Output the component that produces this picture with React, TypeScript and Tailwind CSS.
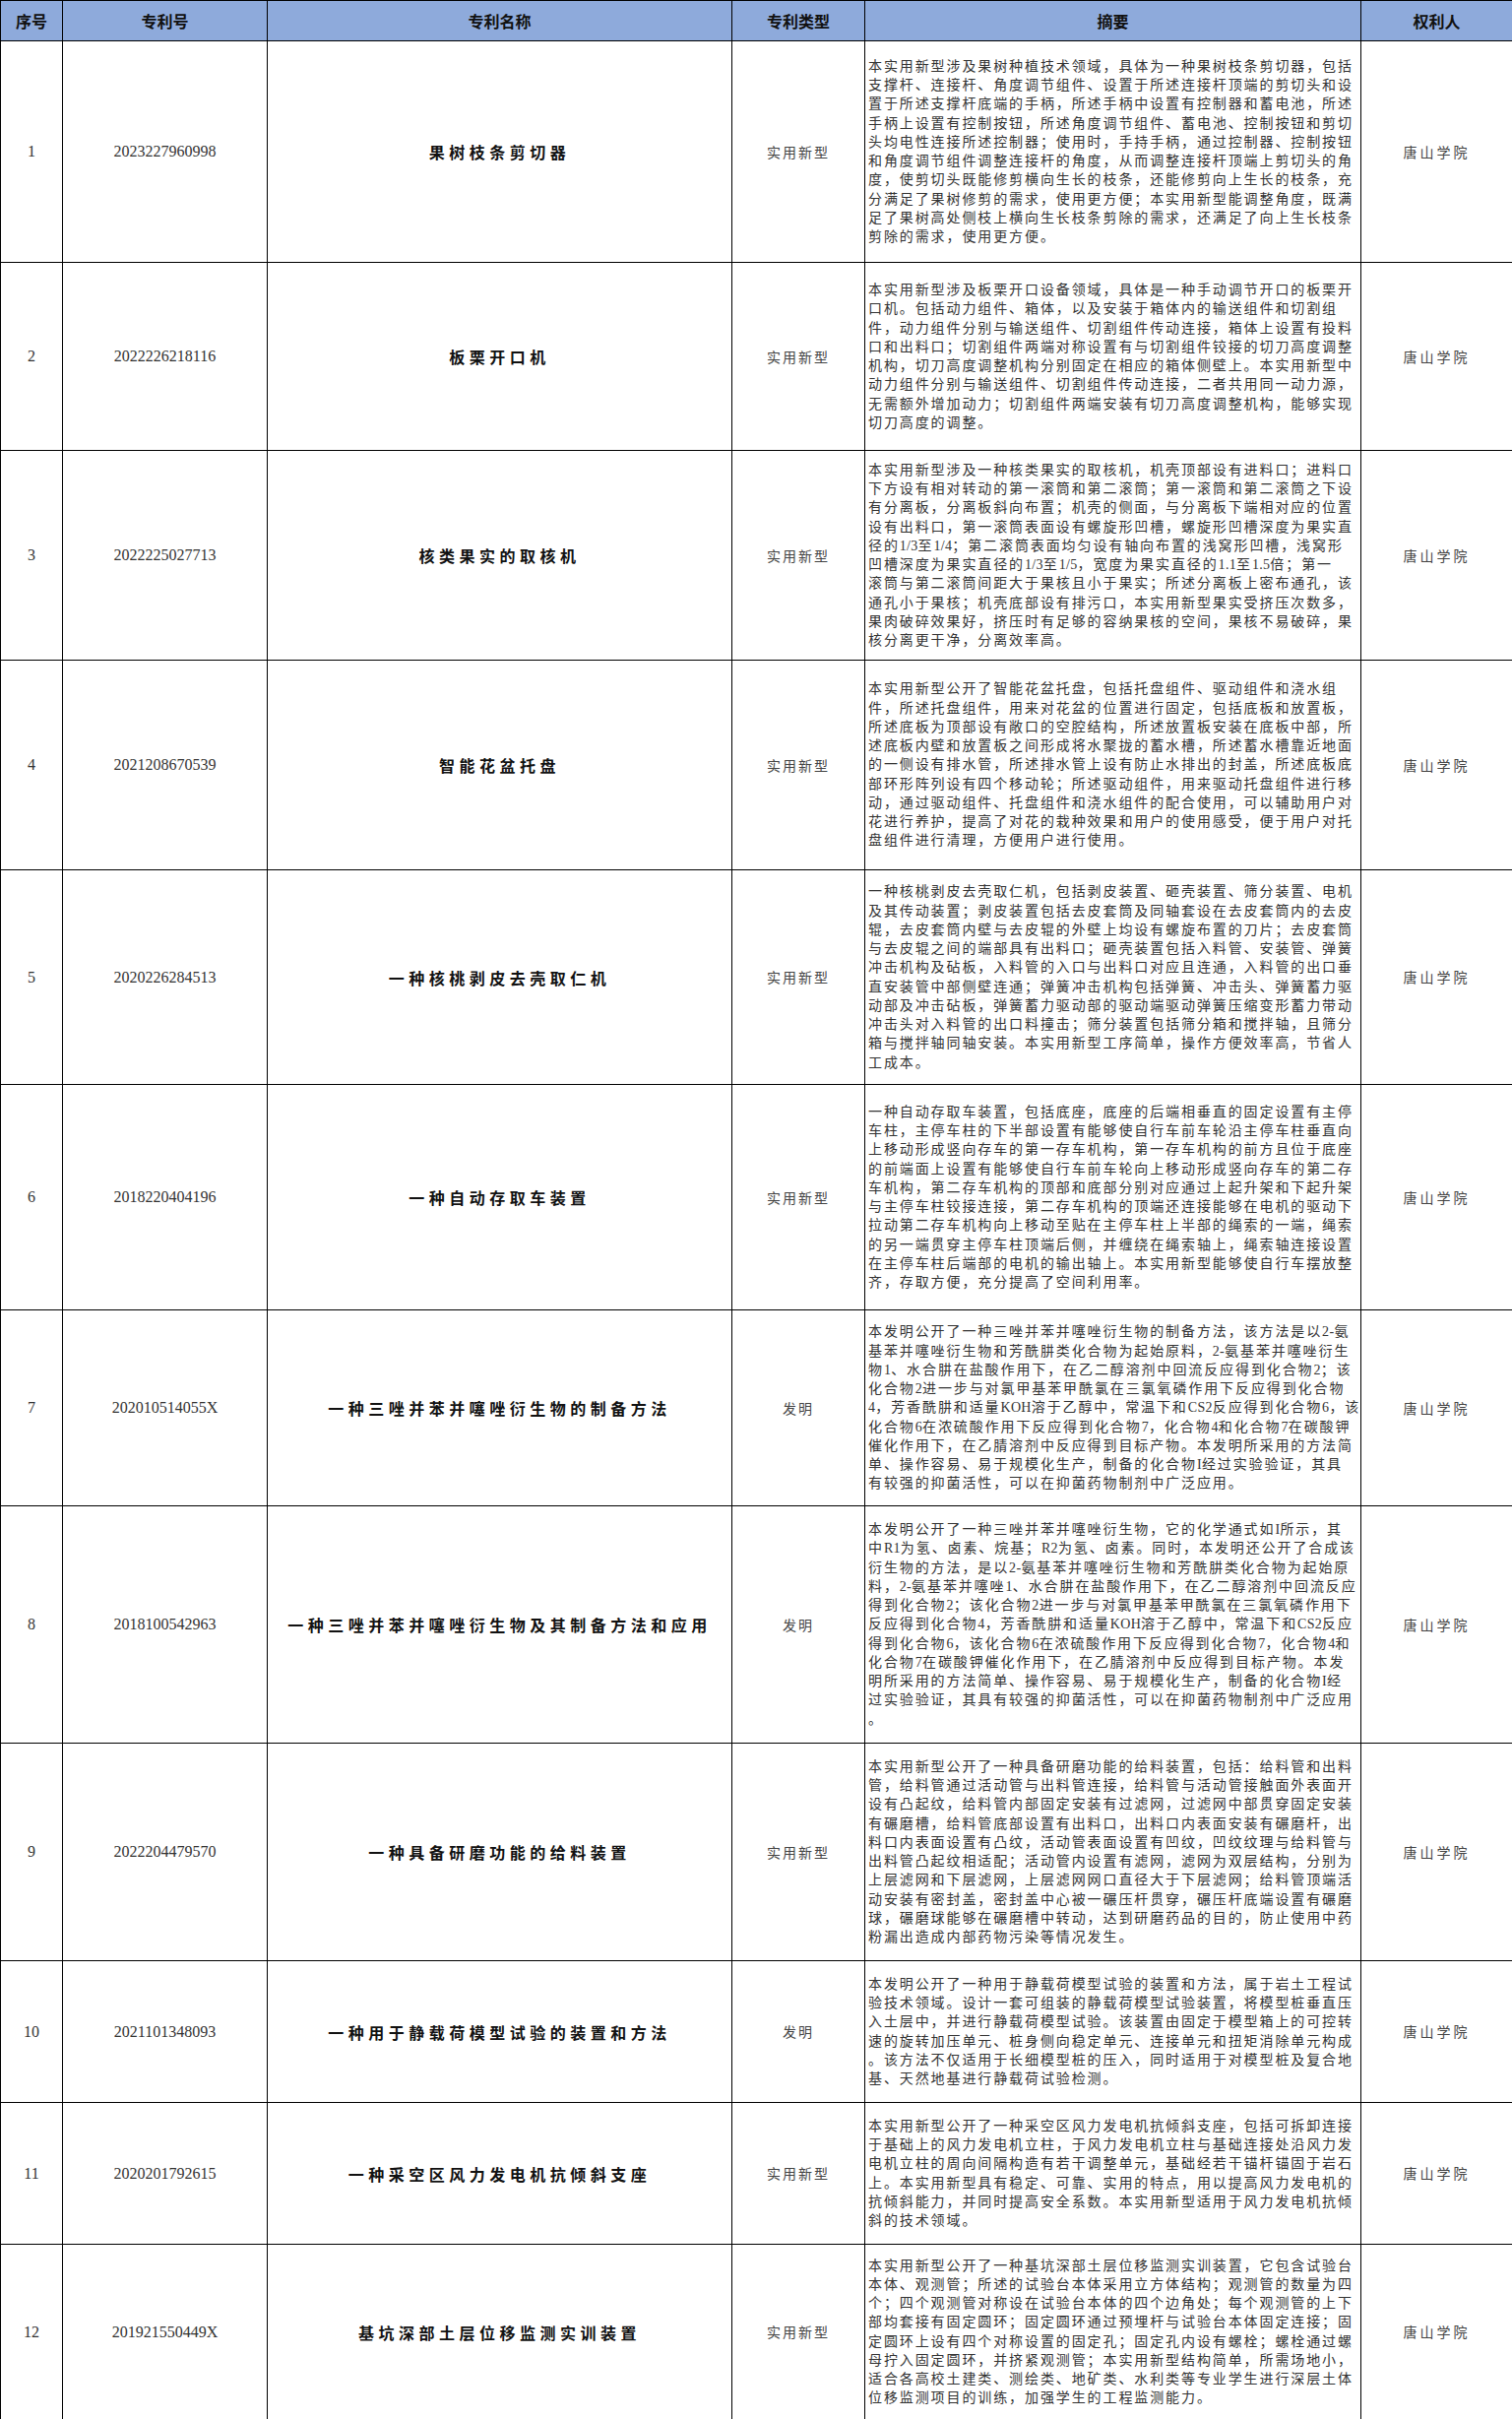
import React from 'react'

interface Patent {
  no: string
  name: string
  kind: string
  height: number
  abstract: string[]
}

const PATENTS: Patent[] = [
  {
    no: '2023227960998',
    name: '果树枝条剪切器',
    kind: '实用新型',
    height: 225,
    abstract: [
      '本实用新型涉及果树种植技术领域，具体为一种果树枝条剪切器，包括',
      '支撑杆、连接杆、角度调节组件、设置于所述连接杆顶端的剪切头和设',
      '置于所述支撑杆底端的手柄，所述手柄中设置有控制器和蓄电池，所述',
      '手柄上设置有控制按钮，所述角度调节组件、蓄电池、控制按钮和剪切',
      '头均电性连接所述控制器；使用时，手持手柄，通过控制器、控制按钮',
      '和角度调节组件调整连接杆的角度，从而调整连接杆顶端上剪切头的角',
      '度，使剪切头既能修剪横向生长的枝条，还能修剪向上生长的枝条，充',
      '分满足了果树修剪的需求，使用更方便；本实用新型能调整角度，既满',
      '足了果树高处侧枝上横向生长枝条剪除的需求，还满足了向上生长枝条',
      '剪除的需求，使用更方便。',
    ],
  },
  {
    no: '2022226218116',
    name: '板栗开口机',
    kind: '实用新型',
    height: 191,
    abstract: [
      '本实用新型涉及板栗开口设备领域，具体是一种手动调节开口的板栗开',
      '口机。包括动力组件、箱体，以及安装于箱体内的输送组件和切割组',
      '件，动力组件分别与输送组件、切割组件传动连接，箱体上设置有投料',
      '口和出料口；切割组件两端对称设置有与切割组件铰接的切刀高度调整',
      '机构，切刀高度调整机构分别固定在相应的箱体侧壁上。本实用新型中',
      '动力组件分别与输送组件、切割组件传动连接，二者共用同一动力源，',
      '无需额外增加动力；切割组件两端安装有切刀高度调整机构，能够实现',
      '切刀高度的调整。',
    ],
  },
  {
    no: '2022225027713',
    name: '核类果实的取核机',
    kind: '实用新型',
    height: 213,
    abstract: [
      '本实用新型涉及一种核类果实的取核机，机壳顶部设有进料口；进料口',
      '下方设有相对转动的第一滚筒和第二滚筒；第一滚筒和第二滚筒之下设',
      '有分离板，分离板斜向布置；机壳的侧面，与分离板下端相对应的位置',
      '设有出料口，第一滚筒表面设有螺旋形凹槽，螺旋形凹槽深度为果实直',
      '径的1/3至1/4；第二滚筒表面均匀设有轴向布置的浅窝形凹槽，浅窝形',
      '凹槽深度为果实直径的1/3至1/5，宽度为果实直径的1.1至1.5倍；第一',
      '滚筒与第二滚筒间距大于果核且小于果实；所述分离板上密布通孔，该',
      '通孔小于果核；机壳底部设有排污口，本实用新型果实受挤压次数多，',
      '果肉破碎效果好，挤压时有足够的容纳果核的空间，果核不易破碎，果',
      '核分离更干净，分离效率高。',
    ],
  },
  {
    no: '2021208670539',
    name: '智能花盆托盘',
    kind: '实用新型',
    height: 213,
    abstract: [
      '本实用新型公开了智能花盆托盘，包括托盘组件、驱动组件和浇水组',
      '件，所述托盘组件，用来对花盆的位置进行固定，包括底板和放置板，',
      '所述底板为顶部设有敞口的空腔结构，所述放置板安装在底板中部，所',
      '述底板内壁和放置板之间形成将水聚拢的蓄水槽，所述蓄水槽靠近地面',
      '的一侧设有排水管，所述排水管上设有防止水排出的封盖，所述底板底',
      '部环形阵列设有四个移动轮；所述驱动组件，用来驱动托盘组件进行移',
      '动，通过驱动组件、托盘组件和浇水组件的配合使用，可以辅助用户对',
      '花进行养护，提高了对花的栽种效果和用户的使用感受，便于用户对托',
      '盘组件进行清理，方便用户进行使用。',
    ],
  },
  {
    no: '2020226284513',
    name: '一种核桃剥皮去壳取仁机',
    kind: '实用新型',
    height: 218,
    abstract: [
      '一种核桃剥皮去壳取仁机，包括剥皮装置、砸壳装置、筛分装置、电机',
      '及其传动装置；剥皮装置包括去皮套筒及同轴套设在去皮套筒内的去皮',
      '辊，去皮套筒内壁与去皮辊的外壁上均设有螺旋布置的刀片；去皮套筒',
      '与去皮辊之间的端部具有出料口；砸壳装置包括入料管、安装管、弹簧',
      '冲击机构及砧板，入料管的入口与出料口对应且连通，入料管的出口垂',
      '直安装管中部侧壁连通；弹簧冲击机构包括弹簧、冲击头、弹簧蓄力驱',
      '动部及冲击砧板，弹簧蓄力驱动部的驱动端驱动弹簧压缩变形蓄力带动',
      '冲击头对入料管的出口料撞击；筛分装置包括筛分箱和搅拌轴，且筛分',
      '箱与搅拌轴同轴安装。本实用新型工序简单，操作方便效率高，节省人',
      '工成本。',
    ],
  },
  {
    no: '2018220404196',
    name: '一种自动存取车装置',
    kind: '实用新型',
    height: 229,
    abstract: [
      '一种自动存取车装置，包括底座，底座的后端相垂直的固定设置有主停',
      '车柱，主停车柱的下半部设置有能够使自行车前车轮沿主停车柱垂直向',
      '上移动形成竖向存车的第一存车机构，第一存车机构的前方且位于底座',
      '的前端面上设置有能够使自行车前车轮向上移动形成竖向存车的第二存',
      '车机构，第二存车机构的顶部和底部分别对应通过上起升架和下起升架',
      '与主停车柱铰接连接，第二存车机构的顶端还连接能够在电机的驱动下',
      '拉动第二存车机构向上移动至贴在主停车柱上半部的绳索的一端，绳索',
      '的另一端贯穿主停车柱顶端后侧，并缠绕在绳索轴上，绳索轴连接设置',
      '在主停车柱后端部的电机的输出轴上。本实用新型能够使自行车摆放整',
      '齐，存取方便，充分提高了空间利用率。',
    ],
  },
  {
    no: '202010514055X',
    name: '一种三唑并苯并噻唑衍生物的制备方法',
    kind: '发明',
    height: 199,
    abstract: [
      '本发明公开了一种三唑并苯并噻唑衍生物的制备方法，该方法是以2-氨',
      '基苯并噻唑衍生物和芳酰肼类化合物为起始原料，2-氨基苯并噻唑衍生',
      '物1、水合肼在盐酸作用下，在乙二醇溶剂中回流反应得到化合物2；该',
      '化合物2进一步与对氯甲基苯甲酰氯在三氯氧磷作用下反应得到化合物',
      '4，芳香酰肼和适量KOH溶于乙醇中，常温下和CS2反应得到化合物6，该',
      '化合物6在浓硫酸作用下反应得到化合物7，化合物4和化合物7在碳酸钾',
      '催化作用下，在乙腈溶剂中反应得到目标产物。本发明所采用的方法简',
      '单、操作容易、易于规模化生产，制备的化合物I经过实验验证，其具',
      '有较强的抑菌活性，可以在抑菌药物制剂中广泛应用。',
    ],
  },
  {
    no: '2018100542963',
    name: '一种三唑并苯并噻唑衍生物及其制备方法和应用',
    kind: '发明',
    height: 241,
    abstract: [
      '本发明公开了一种三唑并苯并噻唑衍生物，它的化学通式如I所示，其',
      '中R1为氢、卤素、烷基；R2为氢、卤素。同时，本发明还公开了合成该',
      '衍生物的方法，是以2-氨基苯并噻唑衍生物和芳酰肼类化合物为起始原',
      '料，2-氨基苯并噻唑1、水合肼在盐酸作用下，在乙二醇溶剂中回流反应',
      '得到化合物2；该化合物2进一步与对氯甲基苯甲酰氯在三氯氧磷作用下',
      '反应得到化合物4，芳香酰肼和适量KOH溶于乙醇中，常温下和CS2反应',
      '得到化合物6，该化合物6在浓硫酸作用下反应得到化合物7，化合物4和',
      '化合物7在碳酸钾催化作用下，在乙腈溶剂中反应得到目标产物。本发',
      '明所采用的方法简单、操作容易、易于规模化生产，制备的化合物I经',
      '过实验验证，其具有较强的抑菌活性，可以在抑菌药物制剂中广泛应用',
      '。',
    ],
  },
  {
    no: '2022204479570',
    name: '一种具备研磨功能的给料装置',
    kind: '实用新型',
    height: 221,
    abstract: [
      '本实用新型公开了一种具备研磨功能的给料装置，包括：给料管和出料',
      '管，给料管通过活动管与出料管连接，给料管与活动管接触面外表面开',
      '设有凸起纹，给料管内部固定安装有过滤网，过滤网中部贯穿固定安装',
      '有碾磨槽，给料管底部设置有出料口，出料口内表面安装有碾磨杆，出',
      '料口内表面设置有凸纹，活动管表面设置有凹纹，凹纹纹理与给料管与',
      '出料管凸起纹相适配；活动管内设置有滤网，滤网为双层结构，分别为',
      '上层滤网和下层滤网，上层滤网网口直径大于下层滤网；给料管顶端活',
      '动安装有密封盖，密封盖中心被一碾压杆贯穿，碾压杆底端设置有碾磨',
      '球，碾磨球能够在碾磨槽中转动，达到研磨药品的目的，防止使用中药',
      '粉漏出造成内部药物污染等情况发生。',
    ],
  },
  {
    no: '2021101348093',
    name: '一种用于静载荷模型试验的装置和方法',
    kind: '发明',
    height: 144,
    abstract: [
      '本发明公开了一种用于静载荷模型试验的装置和方法，属于岩土工程试',
      '验技术领域。设计一套可组装的静载荷模型试验装置，将模型桩垂直压',
      '入土层中，并进行静载荷模型试验。该装置由固定于模型箱上的可控转',
      '速的旋转加压单元、桩身侧向稳定单元、连接单元和扭矩消除单元构成',
      '。该方法不仅适用于长细模型桩的压入，同时适用于对模型桩及复合地',
      '基、天然地基进行静载荷试验检测。',
    ],
  },
  {
    no: '2020201792615',
    name: '一种采空区风力发电机抗倾斜支座',
    kind: '实用新型',
    height: 144,
    abstract: [
      '本实用新型公开了一种采空区风力发电机抗倾斜支座，包括可拆卸连接',
      '于基础上的风力发电机立柱，于风力发电机立柱与基础连接处沿风力发',
      '电机立柱的周向间隔构造有若干调整单元，基础经若干锚杆锚固于岩石',
      '上。本实用新型具有稳定、可靠、实用的特点，用以提高风力发电机的',
      '抗倾斜能力，并同时提高安全系数。本实用新型适用于风力发电机抗倾',
      '斜的技术领域。',
    ],
  },
  {
    no: '201921550449X',
    name: '基坑深部土层位移监测实训装置',
    kind: '实用新型',
    height: 178,
    abstract: [
      '本实用新型公开了一种基坑深部土层位移监测实训装置，它包含试验台',
      '本体、观测管；所述的试验台本体采用立方体结构；观测管的数量为四',
      '个；四个观测管对称设在试验台本体的四个边角处；每个观测管的上下',
      '部均套接有固定圆环；固定圆环通过预埋杆与试验台本体固定连接；固',
      '定圆环上设有四个对称设置的固定孔；固定孔内设有螺栓；螺栓通过螺',
      '母拧入固定圆环，并挤紧观测管；本实用新型结构简单，所需场地小，',
      '适合各高校土建类、测绘类、地矿类、水利类等专业学生进行深层土体',
      '位移监测项目的训练，加强学生的工程监测能力。',
    ],
  },
]

const HEADERS = ['序号', '专利号', '专利名称', '专利类型', '摘要', '权利人']

const cjk = "font-['Noto_Sans_CJK_SC',sans-serif]"
const serifMix = "font-['Liberation_Serif','Noto_Sans_CJK_SC',serif]"

// latin runs (digits, KOH, CS2 ...) keep their own width, the CJK gets the wide spacing
function AbstractLine({ text }: { text: string }) {
  const parts = text.split(/([A-Za-z0-9/.\-]+)/)
  return (
    <div className="whitespace-nowrap">
      {parts.map((part, k) =>
        k % 2 === 1 ? (
          <span key={k} className="tracking-[0.3px]">
            {part}
          </span>
        ) : (
          <React.Fragment key={k}>{part}</React.Fragment>
        )
      )}
    </div>
  )
}

export default function App() {
  return (
    <div className="w-[1536px] bg-white text-black">
      <table className="w-[1536px] table-fixed border-collapse">
        <colgroup>
          <col className="w-[63px]" />
          <col className="w-[208px]" />
          <col className="w-[472px]" />
          <col className="w-[135px]" />
          <col className="w-[504px]" />
          <col className="w-[154px]" />
        </colgroup>
        <thead>
          <tr className="h-[41px] bg-[#8eaadb]">
            {HEADERS.map((h) => (
              <th
                key={h}
                className={`border border-black text-center align-middle text-[16px] font-semibold text-[#111] ${cjk}`}
              >
                {h}
              </th>
            ))}
          </tr>
        </thead>
        <tbody>
          {PATENTS.map((p, i) => (
            <tr key={p.no} style={{ height: p.height }}>
              <td className={`border border-black text-center align-middle text-[16px] text-[#333] ${serifMix}`}>
                {i + 1}
              </td>
              <td className={`border border-black text-center align-middle text-[16px] text-[#333] ${serifMix}`}>
                {p.no}
              </td>
              <td
                className={`border border-black text-center align-middle text-[16px] font-bold tracking-[4.5px] text-[#111] ${cjk}`}
              >
                {p.name}
              </td>
              <td className={`border border-black text-center align-middle text-[14px] tracking-[2px] text-[#444] ${cjk}`}>
                {p.kind}
              </td>
              <td className="border border-black pl-[3px] align-middle">
                <div className={`text-[14px] leading-[19.25px] tracking-[1.9px] text-[#333] ${serifMix}`}>
                  {p.abstract.map((line, j) => (
                    <AbstractLine key={j} text={line} />
                  ))}
                </div>
              </td>
              <td className={`border border-black text-center align-middle text-[14px] tracking-[3px] text-[#444] ${cjk}`}>
                唐山学院
              </td>
            </tr>
          ))}
        </tbody>
      </table>
    </div>
  )
}
